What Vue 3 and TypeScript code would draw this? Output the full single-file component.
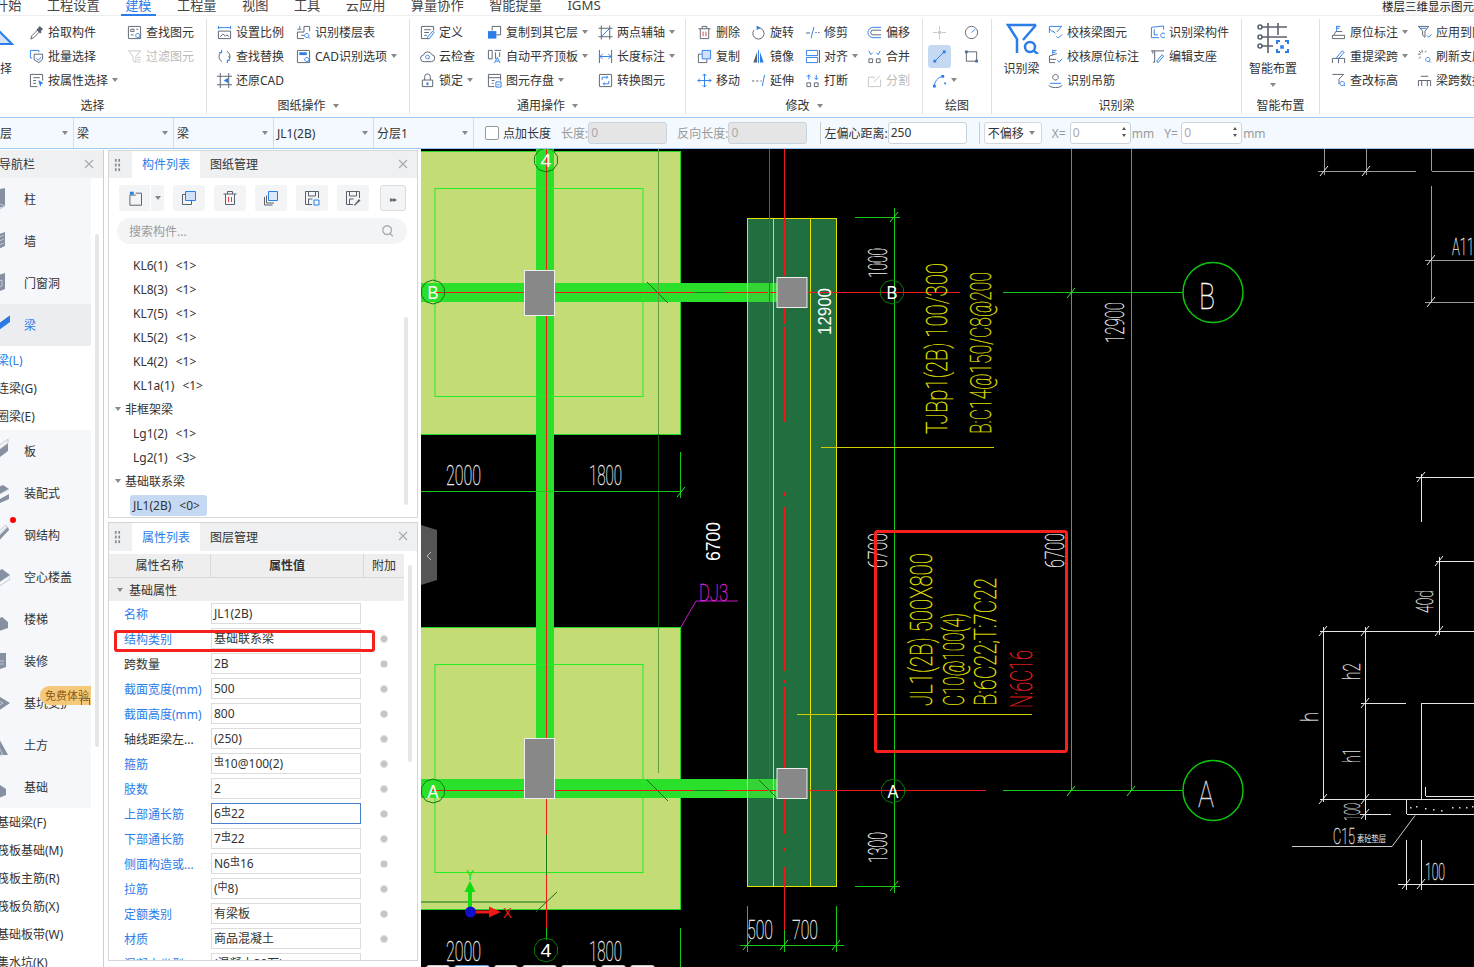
<script setup lang="ts">
const GRAY = '#59616d'
const BLUE = '#2b7de9'

// 图标都由几段 path 拼成：灰线、蓝线、蓝填充、灰填充
function ic(g = '', b = '', bf = '', gf = '', red = '') {
  let s = ''
  if (gf) s += `<path d="${gf}" fill="${GRAY}"/>`
  if (bf) s += `<path d="${bf}" fill="${BLUE}"/>`
  if (g) s += `<path d="${g}" fill="none" stroke="${GRAY}"/>`
  if (b) s += `<path d="${b}" fill="none" stroke="${BLUE}"/>`
  if (red) s += `<path d="${red}" fill="none" stroke="#e53935"/>`
  return s
}
const box = 'M2 1.5h12a.5.5 0 0 1 .5.5v12a.5.5 0 0 1-.5.5H2a.5.5 0 0 1-.5-.5V2a.5.5 0 0 1 .5-.5z'
const mag = 'M11.5 9a2.2 2.2 0 1 0 .01 0M13 12.6l1.8 1.8'
const feet = 'M2 10.5h4v4H2zM10 10.5h4v4h-4z'

const icons: Record<string, string> = {
  pick: ic('M3 11.5l6-6 2 2-6 6-3 1.5z', '', '', 'M9.5 3.5l2-2.5 3.5 3.5-2.5 2 1 1-1.5 1.5-4-4 1.5-1.5z'),
  batch: ic('M5.5 5.5h9v5.5l-4 3.5-5-3z', 'M10.5 3.5V1.5h-9v8h2M8 10l2 2 3-3.5'),
  attrsel: ic('M14.5 8V1.5h-13v13H9M4.5 5h7M4.5 8h3M4.5 11h3', '', 'M10 7.5l5.5 3.5-2.5.8-1 3z'),
  find: ic(box + 'M4 4.5h3.5v2.5H4zM4 10.5h3M10 4.5h2', mag),
  filter: ic('M1.5 2h13l-5 6v6l-3-1.5V8zM11 9h3.5M11 11.5h3.5M11 14h3.5'),
  scale: ic('M1.5 6.5h13v8h-13zM3.5 12.5l3-3 2.5 2.5 1.5-1.5 2.5 2', 'M1.5 1v3.5M14.5 1v3.5M2 2.8h12'),
  replace: ic('M10.5 2.5a6 6 0 0 1 3 7.5l-1-2.5M5.5 13.5a6 6 0 0 1-3-7.5', 'M5.5 2.5A6 6 0 0 0 2.5 6M10.5 13.5a6 6 0 0 0 3-3.5M5 1v3H2M11 15v-3h3'),
  restore: ic('M3.5 0v16M12.5 0v16M0 3.5h16M0 12.5h16', '', 'M12 5L7 8l5 3z'),
  floor: ic('M8.5 1.5v6h-7v7h7M8.5 1.5h6v5M1.5 4.5h4M5.5 11h3', 'M4 1v3' + mag),
  cadopt: ic(box, mag, 'M3.5 3.5h8v3h-8z'),
  define: ic('M14.5 6V1.5h-13v13h8M4.5 5h7M4.5 8h5M4.5 11h3', 'M10 14.5l5-6.5-1.5-1.5-5.5 6.5v1.5z'),
  cloud: ic('M4.5 13.5a3.5 3.5 0 0 1-.8-7A4.7 4.7 0 0 1 12.6 6a3.8 3.8 0 0 1-.2 7.5z', 'M8 6.5a2 2 0 1 0 .01 0M9.5 10l1 1'),
  lock: ic('M2.5 7.5h11v7h-11zM5 7.5V4a3 3 0 0 1 6 0v3.5', '', 'M7 10h2v3H7z'),
  copyfloor: ic('M5.5 6V1.5h9v9H10', '', 'M1 6.5h9v8H1z'),
  autoalign: ic('M1.5 1.5h4v9h-4zM8 1.5h7M9 3.5v7M13.5 3.5v5', 'M8 15l3-6 3 6M9.5 13h3'),
  save: ic('M14.5 8V1.5h-13v13H8M1.5 5h13M5 8h3M5 11h2', 'M9.5 9.5H15V15H9.5zM11 12.5h2.5'),
  twoaxis: ic('M3.5 .5v15M12.5 .5v15M.5 3.5h15M.5 12.5h15', 'M3.5 12.5l9-9'),
  dimlen: ic('M1.5 1v14M14.5 1v14', 'M2 8h12M2 8l3-2.5M2 8l3 2.5M14 8l-3-2.5M14 8l-3 2.5'),
  convert: ic(box, 'M4.5 7.5v-3h6M9 3l1.5 1.5L9 6M11.5 8.5v3h-6M7 13l-1.5-1.5L7 10'),
  del: ic('M1.5 4h13M3.5 4v10.5h9V4M5.5 4V1.5h5V4', '', '', '', 'M6.5 7v5M9.5 7v5'),
  copy: ic('M5 5.5H1.5v9h9V11') + `<path d="M5.5 1.5h9v9h-9z" fill="#cfe2fa" stroke="${BLUE}"/>`,
  move: ic('', 'M8 1v14M1 8h14M6 3l2-2 2 2M6 13l2 2 2-2M3 6L1 8l2 2M13 6l2 2-2 2'),
  rotate: ic('M8 3a6 6 0 1 1-5 2.6', '', 'M6 .5v5l4-2.5z'),
  mirror: ic('', 'M8 1v14', 'M9.5 3l4 11.5h-4z', 'M6.5 3l-4 11.5h4z'),
  extend: ic('M1 8.5h2.5M5.5 8.5H8M10 8.5h1.5', 'M14.5 2L12 14'),
  trim: ic('M1 8.5h4.5M11 8h1.5M14 8h1.5', 'M9.5 2L6.5 14'),
  align: ic('', 'M1.5 1.5h12V7h-12zM1.5 9h12v5.5h-12z', '', 'M15 1h1v14h-1z'),
  break: ic(feet, 'M4 2v5M2 4l2-2 2 2M12 7V2M10 5l2 2 2-2'),
  offset: ic('M15 5.5H6.5a2.5 2.5 0 0 0 0 5H15', 'M15 2.5H6.5a5.5 5.5 0 0 0 0 11H15'),
  merge: ic(feet, 'M2 2l2 4 2-2M14 2l-2 4-2-2'),
  split: ic('M14.5 7v7.5h-13v-10h7M7 10l7-7'),
  point: ic('M8 1v5M8 10v5M1 8h5M10 8h5', '', '', 'M6.5 6.5h3v3h-3z'),
  circle: ic('M8 1.5a6.5 6.5 0 1 0 .01 0', 'M8 8l4-3.5'),
  line: ic('', 'M3 13L13 3', 'M1.5 11.5h3v3h-3zM11.5 1.5h3v3h-3z'),
  rect: ic('M2.5 3h11v10h-11z', '', 'M1 1.5h3v3H1zM12 11.5h3v3h-3z'),
  arc: ic('', 'M2.5 14A11 11 0 0 1 11 3.5', 'M1 12.5h3v3H1zM10 2h3v3h-3zM13 10h2v2h-2z'),
  checkbeam: ic('', 'M1.5 1.5h13M1.5 1.5v7M14.5 1.5l-5 6M5 6l3 3M1.5 4l4 4M9 12l2 2 4-4'),
  checkspan: ic('M1.5 14.5v-7M1.5 7.5l8-2.5M1.5 11h7M1.5 14.5h6', 'M5 1v5M5 1.5h4M5 3.5h3M10 12l2 2 3-3.5'),
  hanger: ic('M1 13a7 2.5 0 0 0 14 0M8 1.5a3 3 0 1 0 .01 0', 'M2 11h12'),
  beamcomp: ic('', 'M1.5 2.5v11h8M1.5 2.5l13-1.5v4M4.5 4.5v6h4M14 8.5a2.5 2.5 0 1 0 .01 0'),
  support: ic('M1 2h14M5 2v12M3 2v3M5 14H3', 'M9 14l5.5-6.5L13 6l-5.5 6.5V14z'),
  orig: ic('M1.5 14.5V11h13v3.5M1.5 14.5h13M3 11l2-4h7', 'M6 1v6M6 1.5h4M6 3.5h3'),
  reextract: ic('M1.5 15v-5h13v5M8 10v5', 'M6 9l6-7 2 1.5L8 10.5z'),
  height: ic('M1.5 1.5h12l-5 5V12', 'M12 9a2.3 2.3 0 1 0 .01 0M13.5 12.5L15 14'),
  apply: ic('M1.5 1.5h11l-4 5V13L6 11V6.5z', 'M3 3.5h7M10.5 11l2 2 3-3'),
  refresh: ic('M5.5 1v3M1 5.5h3M2 2l2 2M10 2L8.5 3.5M2 10l2-1.5', mag),
  spancopy: ic('M1.5 14V8M14.5 14V8M1.5 8h13M4 3.5h8M5 8v6M11 8v6'),
  newdoc: ic('M3 5v10.5h12V3H9M3 5h6', '', 'M3 1.5h4v3H3z'),
  delbig: ic('M1.5 4h13M3.5 4v10.5h9V4M5.5 4V1.5h5V4', '', '', '', 'M6.5 7v5M9.5 7v5'),
  copyup: ic('M5 4.5H1.5v10h9V11') + `<path d="M4.5 1.5h10v9h-10z" fill="#cfe2fa" stroke="${BLUE}"/>`,
  layers: ic('M1.5 7v8h8M3.5 5.5V13H11') + `<path d="M5.5 1.5h9v9h-9z" fill="#dbe9fb" stroke="${BLUE}"/>`,
  savebox: ic('M14.5 8V1.5h-13v13H8M4.5 1.5V6h7V1.5M4.5 14.5V9h4', 'M10 10h5v5h-5z'),
  saveedit: ic('M14.5 8V1.5h-13v13H8M4.5 1.5V6h7V1.5M4.5 14.5V9h4', '', '', 'M9 15l5-6 1.5 1.5-5.5 5H9z'),
  search: `<path d="M7 2a5 5 0 1 0 .01 0M10.5 11l3 3" fill="none" stroke="#aaa" stroke-width="1.5"/>`,
}

type Item = { t: string; i: string; drop?: boolean; dis?: boolean; on?: boolean }
type Col = { w: number; items?: Item[]; big?: { t: string; k: string; drop?: boolean } }
type Group = { w: number; pad: number; label: string; drop?: boolean; cols: Col[] }

const groups: Group[] = [
  {
    w: 221, pad: 0, label: '选择',
    cols: [
      { w: 43, big: { t: '选择', k: 'select' } },
      { w: 98, items: [{ t: '拾取构件', i: 'pick' }, { t: '批量选择', i: 'batch' }, { t: '按属性选择', i: 'attrsel', drop: true }] },
      { w: 78, items: [{ t: '查找图元', i: 'find' }, { t: '过滤图元', i: 'filter', dis: true }] },
    ],
  },
  {
    w: 203, pad: 10, label: '图纸操作', drop: true,
    cols: [
      { w: 79, items: [{ t: '设置比例', i: 'scale' }, { t: '查找替换', i: 'replace' }, { t: '还原CAD', i: 'restore' }] },
      { w: 110, items: [{ t: '识别楼层表', i: 'floor' }, { t: 'CAD识别选项', i: 'cadopt', drop: true }] },
    ],
  },
  {
    w: 276, pad: 10, label: '通用操作', drop: true,
    cols: [
      { w: 67, items: [{ t: '定义', i: 'define' }, { t: '云检查', i: 'cloud' }, { t: '锁定', i: 'lock', drop: true }] },
      { w: 111, items: [{ t: '复制到其它层', i: 'copyfloor', drop: true }, { t: '自动平齐顶板', i: 'autoalign', drop: true }, { t: '图元存盘', i: 'save', drop: true }] },
      { w: 86, items: [{ t: '两点辅轴', i: 'twoaxis', drop: true }, { t: '长度标注', i: 'dimlen', drop: true }, { t: '转换图元', i: 'convert' }] },
    ],
  },
  {
    w: 237, pad: 11, label: '修改', drop: true,
    cols: [
      { w: 54, items: [{ t: '删除', i: 'del' }, { t: '复制', i: 'copy' }, { t: '移动', i: 'move' }] },
      { w: 54, items: [{ t: '旋转', i: 'rotate' }, { t: '镜像', i: 'mirror' }, { t: '延伸', i: 'extend' }] },
      { w: 62, items: [{ t: '修剪', i: 'trim' }, { t: '对齐', i: 'align', drop: true }, { t: '打断', i: 'break' }] },
      { w: 54, items: [{ t: '偏移', i: 'offset' }, { t: '合并', i: 'merge' }, { t: '分割', i: 'split', dis: true }] },
    ],
  },
  {
    w: 69, pad: 9, label: '绘图',
    cols: [
      { w: 32, items: [{ t: '', i: 'point', dis: true }, { t: '', i: 'line', on: true }, { t: '', i: 'arc', drop: true }] },
      { w: 20, items: [{ t: '', i: 'circle' }, { t: '', i: 'rect' }] },
    ],
  },
  {
    w: 250, pad: 3, label: '识别梁',
    cols: [
      { w: 53, big: { t: '识别梁', k: 'beam' } },
      { w: 102, items: [{ t: '校核梁图元', i: 'checkbeam' }, { t: '校核原位标注', i: 'checkspan' }, { t: '识别吊筋', i: 'hanger' }] },
      { w: 88, items: [{ t: '识别梁构件', i: 'beamcomp' }, { t: '编辑支座', i: 'support' }] },
    ],
  },
  {
    w: 78, pad: 1, label: '智能布置',
    cols: [{ w: 60, big: { t: '智能布置', k: 'smart', drop: true } }],
  },
  {
    w: 170, pad: 11, label: '',
    cols: [
      { w: 86, items: [{ t: '原位标注', i: 'orig', drop: true }, { t: '重提梁跨', i: 'reextract', drop: true }, { t: '查改标高', i: 'height' }] },
      { w: 90, items: [{ t: '应用到同名梁', i: 'apply' }, { t: '刷新支座尺寸', i: 'refresh' }, { t: '梁跨数据复制', i: 'spancopy' }] },
    ],
  },
]

const menus = ['开始', '工程设置', '建模', '工程量', '视图', '工具', '云应用', '算量协作', '智能提量', 'IGMS']
const selects = ['首层', '梁', '梁', 'JL1(2B)', '分层1']

type Nav = { t: string; k?: string; sub?: boolean; on?: boolean; dot?: boolean; tag?: boolean }
const nav: Nav[] = [
  { t: '柱', k: 'column' }, { t: '墙', k: 'wall' }, { t: '门窗洞', k: 'door' }, { t: '梁', k: 'beam', on: true },
  { t: '梁(L)', sub: true, on: true }, { t: '连梁(G)', sub: true }, { t: '圈梁(E)', sub: true },
  { t: '板', k: 'slab' }, { t: '装配式', k: 'pre' }, { t: '钢结构', k: 'steel', dot: true }, { t: '空心楼盖', k: 'hollow' },
  { t: '楼梯', k: 'stair' }, { t: '装修', k: 'deco' }, { t: '基坑支护', k: 'pit', tag: true }, { t: '土方', k: 'earth' }, { t: '基础', k: 'found' },
  { t: '基础梁(F)', sub: true }, { t: '筏板基础(M)', sub: true }, { t: '筏板主筋(R)', sub: true },
  { t: '筏板负筋(X)', sub: true }, { t: '基础板带(W)', sub: true }, { t: '集水坑(K)', sub: true },
]
const navShapes: Record<string, [string, string]> = {
  column: ['M14 2l5-1v18l-10 3v-3l5-2z', 'M9 19l5-2 5 2-5 3z'],
  wall: ['M10 6l9-3v14l-9 4z', 'M11 9l7-3M11 13l7-3M11 17l7-3'],
  door: ['M9 5l10-3v16L9 22z', 'M13 10l3-1v6l-3 1z'],
  beam: ['M6 22L24 9V3L6 16z', 'M6 22v-6l18-13'],
  slab: ['M6 16L22 4v4L6 20zM6 20L22 8v4L6 24z', 'M6 12L22 0v4L6 16z'],
  pre: ['M8 8l9-4 6 4-9 5zM8 14l6 4 9-5v5l-9 4-6-4z', 'M8 8l6 5 9-5'],
  steel: ['M6 20L22 4l1 3L8 23z', 'M6 14L20 2l1 2L7 17z'],
  hollow: ['M4 12L16 4l8 6-12 8z', 'M4 12v4l8 6 12-8v-4'],
  stair: ['M6 6l6 6 4-2 6 5v6l-9 3-7-6z', 'M6 6v11'],
  deco: ['M8 4h12v14L8 22z', 'M10 12h8M10 15h8'],
  pit: ['M2 14L14 6l10 6-12 8z', 'M8 13l5-3 4 2-5 3z'],
  earth: ['M2 22L12 4l10 18z', 'M8 22l4-10 5 10z'],
  found: ['M8 2h6v8l6 4v6l-7 3-7-3v-6l2-1z', 'M13 10v13'],
}

type Row = { n: string; pre?: string; sym?: string; post?: string; blue?: boolean; dot?: boolean; focus?: boolean }
const rows: Row[] = [
  { n: '名称', pre: 'JL1(2B)', blue: true },
  { n: '结构类别', pre: '基础联系梁', blue: true, dot: true },
  { n: '跨数量', pre: '2B', dot: true },
  { n: '截面宽度(mm)', pre: '500', blue: true, dot: true },
  { n: '截面高度(mm)', pre: '800', blue: true, dot: true },
  { n: '轴线距梁左...', pre: '(250)', dot: true },
  { n: '箍筋', sym: '虫', post: '10@100(2)', blue: true, dot: true },
  { n: '肢数', pre: '2', blue: true, dot: true },
  { n: '上部通长筋', pre: '6', sym: '虫', post: '22', blue: true, dot: true, focus: true },
  { n: '下部通长筋', pre: '7', sym: '虫', post: '22', blue: true, dot: true },
  { n: '侧面构造或...', pre: 'N6', sym: '虫', post: '16', blue: true, dot: true },
  { n: '拉筋', pre: '(', sym: '中', post: '8)', blue: true, dot: true },
  { n: '定额类别', pre: '有梁板', blue: true, dot: true },
  { n: '材质', pre: '商品混凝土', blue: true, dot: true },
  { n: '混凝土类型', pre: '(混凝土20石)', blue: true, dot: true },
]

type Node = { t: string; c?: string; head?: boolean; on?: boolean }
const list: Node[] = [
  { t: 'KL6(1)', c: '<1>' }, { t: 'KL8(3)', c: '<1>' }, { t: 'KL7(5)', c: '<1>' },
  { t: 'KL5(2)', c: '<1>' }, { t: 'KL4(2)', c: '<1>' }, { t: 'KL1a(1)', c: '<1>' },
  { t: '非框架梁', head: true }, { t: 'Lg1(2)', c: '<1>' }, { t: 'Lg2(1)', c: '<3>' },
  { t: '基础联系梁', head: true }, { t: 'JL1(2B)', c: '<0>', on: true },
]
const tools = [{ i: 'copyup' }, { i: 'delbig' }, { i: 'layers' }, { i: 'savebox' }, { i: 'saveedit' }]

// 画布：坐标直接用截图里的像素坐标
function hex(cx: number, cy: number, r = 12) {
  const pts: string[] = []
  for (let k = 0; k < 10; k++) {
    const a = (Math.PI * 2 * k) / 10 + Math.PI / 10
    pts.push(`${(cx + r * Math.cos(a)).toFixed(1)},${(cy + r * Math.sin(a)).toFixed(1)}`)
  }
  return pts.join(' ')
}
const axisMarks = [
  { t: '4', x: 546, y: 160 }, { t: '4', x: 546, y: 950 }, { t: 'B', x: 433, y: 292 },
  { t: 'A', x: 433, y: 791 }, { t: 'B', x: 892, y: 292 }, { t: 'A', x: 893, y: 791 },
]
function ticks(points: number[][]) {
  return points.map(([x, y]) => `M${x - 4} ${y + 5}L${x + 4} ${y - 5}`).join('')
}
const greenTicks = ticks([[681, 492], [894, 217], [894, 886], [1071, 293], [1071, 791], [1131, 791], [747, 945], [784, 945], [836, 945]])
const whiteTicks = ticks([[1324, 171], [1366, 171], [1431, 260], [1431, 302], [1421, 477], [1323, 631], [1365, 631], [1439, 561], [1439, 631], [1365, 703], [1323, 799], [1365, 799], [1365, 814], [1406, 884], [1421, 884]])

// 横排 CAD 文字
const flat = [
  { t: '2000', x: 446, y: 485, l: 35, s: 28, c: '#f4f4f4' },
  { t: '1800', x: 589, y: 485, l: 33, s: 28, c: '#f4f4f4' },
  { t: '2000', x: 446, y: 961, l: 35, s: 28, c: '#f4f4f4' },
  { t: '1800', x: 589, y: 961, l: 33, s: 28, c: '#f4f4f4' },
  { t: '500', x: 747, y: 939, l: 26, s: 26, c: '#f4f4f4' },
  { t: '700', x: 792, y: 939, l: 26, s: 26, c: '#f4f4f4' },
  { t: 'DJ3', x: 699, y: 601, l: 29, s: 24, c: '#e020e0' },
  { t: 'B', x: 1199, y: 309, l: 16, s: 36, c: '#fff' },
  { t: 'A', x: 1198, y: 807, l: 16, s: 36, c: '#ddd' },
  { t: 'A11', x: 1452, y: 255, l: 22, s: 23, c: '#f0f0f0' },
  { t: 'C15', x: 1333, y: 844, l: 22, s: 22, c: '#eee' },
  { t: '100', x: 1425, y: 880, l: 20, s: 24, c: '#f4f4f4' },
]
// 竖排（逆时针 90°）：x 为基线，y 为起点
const upright = [
  { t: 'TJBp1(2B) 100/300', x: 947, y: 434, l: 171, s: 30, c: '#f0f000' },
  { t: 'B:C14@150/C8@200', x: 991, y: 434, l: 162, s: 30, c: '#e6e600' },
  { t: 'JL1(2B) 500X800', x: 932, y: 706, l: 153, s: 31, c: '#f0f000' },
  { t: 'C10@100(4)', x: 964, y: 706, l: 93, s: 30, c: '#f0f000' },
  { t: 'B:6C22;T:7C22', x: 996, y: 706, l: 128, s: 31, c: '#f0f000' },
  { t: 'N:6C16', x: 1032, y: 708, l: 58, s: 31, c: '#ff2020' },
  { t: '6700', x: 887, y: 568, l: 35, s: 26, c: '#f4f4f4' },
  { t: '6700', x: 1064, y: 568, l: 35, s: 26, c: '#f4f4f4' },
  { t: '1000', x: 887, y: 278, l: 30, s: 26, c: '#f4f4f4' },
  { t: '12900', x: 1124, y: 343, l: 41, s: 26, c: '#f4f4f4' },
  { t: '1300', x: 887, y: 863, l: 31, s: 26, c: '#f4f4f4' },
  { t: '40d', x: 1433, y: 613, l: 23, s: 24, c: '#e6e6e6' },
  { t: 'h2', x: 1360, y: 680, l: 17, s: 24, c: '#e6e6e6' },
  { t: 'h', x: 1318, y: 722, l: 10, s: 24, c: '#e6e6e6' },
  { t: 'h1', x: 1360, y: 763, l: 15, s: 24, c: '#e6e6e6' },
  { t: '100', x: 1360, y: 821, l: 18, s: 22, c: '#e6e6e6' },
]
const solidUp = [
  { t: '12900', x: 831, y: 335, l: 47, s: 19, c: '#fff' },
  { t: '6700', x: 720, y: 561, l: 39, s: 20, c: '#fff' },
]
const dots = [1410, 1416, 1425, 1433, 1441, 1452, 1459, 1466, 1472]
const sheetTabs = [24, 36, 24, 35, 36, 25, 25]
</script>

<template>
  <div class="app">
    <header class="menu">
      <span v-for="m in menus" :key="m" class="menu-item" :class="{ active: m === '建模' }">{{ m }}</span>
      <span class="menu-right">楼层三维显示图元</span>
    </header>

    <section class="ribbon">
      <div v-for="g in groups" :key="g.w + g.label" class="group" :style="{ width: g.w + 'px' }">
        <div class="group-body" :style="{ paddingLeft: g.pad + 'px' }">
          <div v-for="(c, ci) in g.cols" :key="ci" class="col" :style="{ width: c.w + 'px' }">
            <div v-if="c.big" class="big" :class="'big-' + c.big.k">
              <svg v-if="c.big.k === 'select'" class="big-ic" width="28" height="32" viewBox="0 0 28 32">
                <path d="M13 9L26 22H6z" fill="#d5e4f8" stroke="#2b7de9" stroke-width="2" />
              </svg>
              <svg v-else-if="c.big.k === 'beam'" class="big-ic" width="34" height="32" viewBox="0 0 34 32" fill="none" stroke="#2b7de9" stroke-width="2.5">
                <path d="M31 3H3l9 14v14M31 3L18 18" />
                <circle cx="25" cy="25" r="5" />
                <path d="M29 29l4 3" />
              </svg>
              <svg v-else class="big-ic" width="34" height="32" viewBox="0 0 34 32" fill="none" stroke="#59616d" stroke-width="1.6">
                <path d="M5 5h26M5 15h26M5 24h12M12 1v30M22 1v12" />
                <circle cx="4" cy="5" r="2" />
                <circle cx="4" cy="15" r="2" />
                <circle cx="4" cy="24" r="2" />
                <path d="M21 22v-3h3M29 19h3v3M32 27v3h-3M24 30h-3v-3" stroke="#2b7de9" stroke-width="2" />
                <path d="M25 24h2v2h-2z" stroke="#2b7de9" />
              </svg>
              <span class="big-text">{{ c.big.t }}</span>
              <i v-if="c.big.drop" class="caret big-caret" />
            </div>
            <template v-else>
              <div v-for="it in c.items" :key="it.i" class="item" :class="{ dis: it.dis, on: it.on }">
                <svg class="ic" viewBox="0 0 16 16" v-html="icons[it.i]" />
                <span v-if="it.t">{{ it.t }}</span>
                <i v-if="it.drop" class="caret" />
              </div>
            </template>
          </div>
        </div>
        <div class="group-label">{{ g.label }}<i v-if="g.drop" class="caret label-caret" /></div>
      </div>
    </section>

    <section class="optbar">
      <div v-for="(s, i) in selects" :key="i" class="opt-select" :class="{ first: i === 0 }">
        <span>{{ s }}</span><i class="caret" />
      </div>
      <label class="opt-check"><i class="check" />点加长度</label>
      <span class="opt-label dim len">长度:</span>
      <span class="opt-input off">0</span>
      <span class="opt-label dim rev">反向长度:</span>
      <span class="opt-input off">0</span>
      <i class="opt-div" />
      <span class="opt-label">左偏心距离:</span>
      <span class="opt-input val">250</span>
      <i class="opt-div second" />
      <div class="offset-select">不偏移<i class="caret" /></div>
      <span class="opt-label dim xlab">X=</span>
      <span class="opt-input spin"><em>0</em><b class="arrows"><i class="up" /><i class="down" /></b></span>
      <span class="opt-label dim unit">mm</span>
      <span class="opt-label dim ylab">Y=</span>
      <span class="opt-input spin"><em>0</em><b class="arrows"><i class="up" /><i class="down" /></b></span>
      <span class="opt-label dim unit">mm</span>
    </section>

    <main class="work">
      <aside class="nav">
        <div class="nav-head">
          <span>导航栏</span>
          <svg class="close" viewBox="0 0 10 10"><path d="M1 1l8 8M9 1l-8 8" /></svg>
        </div>
        <div class="nav-list">
          <div
            v-for="n in nav"
            :key="n.t + (n.sub ? 's' : '')"
            class="nav-row"
            :class="{ sub: n.sub, on: n.on }"
          >
            <svg v-if="n.k" class="nav-ic" viewBox="0 0 24 24">
              <path :d="navShapes[n.k][0]" :fill="n.on ? '#2b7de9' : '#8790a0'" />
              <path :d="navShapes[n.k][1]" fill="none" :stroke="n.on ? '#1c5fc0' : '#c3c8d2'" />
            </svg>
            <span>{{ n.t }}</span>
            <i v-if="n.dot" class="red-dot" />
            <span v-if="n.tag" class="free-tag">免费体验<i class="tag-lock" /></span>
          </div>
        </div>
        <i class="nav-scroll" />
      </aside>

      <div class="panels">
        <section class="panel list-panel">
          <div class="panel-head">
            <i class="grip" />
            <span class="tab active">构件列表</span>
            <span class="tab">图纸管理</span>
            <svg class="close" viewBox="0 0 10 10"><path d="M1 1l8 8M9 1l-8 8" /></svg>
          </div>
          <div class="toolbar">
            <div class="tool split">
              <svg class="tool-ic" viewBox="0 0 16 16" v-html="icons.newdoc" />
              <span class="tool-drop"><i class="caret" /></span>
            </div>
            <div v-for="t in tools" :key="t.i" class="tool">
              <svg class="tool-ic" viewBox="0 0 16 16" v-html="icons[t.i]" />
            </div>
            <div class="tool more">▸▸</div>
          </div>
          <div class="search">
            <span>搜索构件...</span>
            <svg class="search-ic" viewBox="0 0 16 16" v-html="icons.search" />
          </div>
          <ul class="tree">
            <li v-for="r in list" :key="r.t" class="tree-row" :class="{ head: r.head }">
              <i v-if="r.head" class="caret tree-caret" />
              <span class="tree-text" :class="{ on: r.on }">{{ r.t }}<em v-if="r.c">{{ r.c }}</em></span>
            </li>
          </ul>
          <i class="panel-scroll" />
        </section>

        <section class="panel attr-panel">
          <div class="panel-head">
            <i class="grip" />
            <span class="tab active">属性列表</span>
            <span class="tab">图层管理</span>
            <svg class="close" viewBox="0 0 10 10"><path d="M1 1l8 8M9 1l-8 8" /></svg>
          </div>
          <div class="attr-head">
            <span>属性名称</span>
            <span class="strong">属性值</span>
            <span>附加</span>
          </div>
          <div class="attr-group"><i class="caret" />基础属性</div>
          <div v-for="r in rows" :key="r.n" class="attr-row">
            <span class="attr-name" :class="{ blue: r.blue }">{{ r.n }}</span>
            <span class="attr-val" :class="{ focus: r.focus }">{{ r.pre }}<sup v-if="r.sym">{{ r.sym }}</sup>{{ r.post }}</span>
            <i v-if="r.dot" class="attr-dot" />
          </div>
          <i class="attr-highlight" />
          <i class="attr-scroll" />
        </section>
      </div>

      <div class="canvas">
        <svg class="cad" viewBox="421 149 1053 818" width="1053" height="818">
          <rect x="421" y="149" width="1053" height="818" fill="#000" />

          <!-- 独立基础 -->
          <g fill="#c3dc76" stroke="#22d822">
            <rect x="420.5" y="151.5" width="260" height="283" />
            <rect x="420.5" y="627.5" width="260" height="282" />
          </g>
          <!-- 联系梁 -->
          <g fill="#2be02b">
            <rect x="536" y="149" width="18" height="590" />
            <rect x="421" y="283" width="356" height="19" />
            <rect x="421" y="779" width="356" height="19" />
          </g>
          <g fill="none" stroke="#22ee22">
            <rect x="435" y="188.5" width="208" height="208" />
            <rect x="435" y="664.5" width="208" height="208" />
          </g>

          <!-- 基础梁条带 -->
          <rect x="747.5" y="218.5" width="89" height="668" fill="#216f3f" />
          <path d="M747 283h30v19h-30zM747 779h30v19h-30z" fill="#33d433" />
          <g fill="none" stroke="#e4e400" shape-rendering="crispEdges">
            <rect x="747.5" y="218.5" width="89" height="668" />
            <path d="M773.5 218v668M810.5 218v668" />
          </g>

          <!-- 暗色轴线 -->
          <g fill="none" shape-rendering="crispEdges">
            <path d="M658.5 149v285M658.5 627v146" stroke="#5fa040" stroke-width="1.5" />
            <path d="M658.5 434v193" stroke="#0d5a0d" stroke-width="1.5" />
            <path d="M769.5 149v629" stroke="#0f8a2a" />
            <path d="M421 901.5h125" stroke="#6aa645" stroke-width="2" />
          </g>
          <path d="M647 282l21 21M647 780l21 21M759 780l18 18M536 912l21-20" stroke="#1a6a1a" fill="none" />

          <!-- 红色轴线 -->
          <g fill="none" stroke="#f01818" shape-rendering="crispEdges">
            <path d="M546.5 149v686M546.5 875v53" />
            <path d="M432 292.5h262M726 292.5h42M770 292.5h190" />
            <path d="M432 790.5h262M726 790.5h42M770 790.5h216" />
            <path d="M784.5 149v127M784.5 308v16M784.5 327v95M784.5 492v4M784.5 507v164M784.5 680v3M784.5 687v147M784.5 848v3M784.5 867v63" />
          </g>
          <path d="M694 292.5h32M694 790.5h32M546.5 835v40" stroke="#1a7a1a" fill="none" shape-rendering="crispEdges" />

          <!-- 柱 -->
          <g fill="#888" stroke="#eee">
            <rect x="524.5" y="270.5" width="30" height="45" />
            <rect x="777" y="277.5" width="30" height="30" />
            <rect x="524.5" y="738.5" width="30" height="60" />
            <rect x="777" y="768.5" width="30" height="30" />
          </g>

          <!-- 绿色尺寸线 -->
          <g fill="none" stroke="#16c916" shape-rendering="crispEdges">
            <path d="M421 491.5h261M680.5 452v46M680.5 928v39" />
            <path d="M894.5 208v685M855 217.5h45M855 886.5h45" />
            <path d="M1003 292.5h180M1003 790.5h180" />
            <path d="M1071.5 149v642M1131.5 149v642" />
            <path d="M747.5 906v46M784.5 930v22M836.5 906v46M740 945.5h104" />
            <path d="M546.5 928v12" />
          </g>
          <path :d="greenTicks" stroke="#2fe82f" fill="none" />
          <ellipse cx="1213" cy="292.5" rx="30" ry="30" fill="none" stroke="#0cc40c" stroke-width="1.5" />
          <ellipse cx="1213" cy="790.5" rx="30" ry="30" fill="none" stroke="#0cc40c" stroke-width="1.5" />

          <!-- 轴号 -->
          <g v-for="m in axisMarks" :key="m.t + m.x + m.y">
            <polygon :points="hex(m.x, m.y)" fill="none" stroke="#0b7a0b" />
            <text class="axis-no" :x="m.x" :y="m.y + 7" text-anchor="middle" textLength="11" lengthAdjust="spacingAndGlyphs">{{ m.t }}</text>
          </g>

          <!-- 标注引线 -->
          <path d="M681 627l15-26h42" stroke="#c818c8" fill="none" />
          <path d="M821 447.5h173M797 714.5h235" stroke="#cfcf00" fill="none" shape-rendering="crispEdges" />

          <!-- 右侧大样 -->
          <g fill="none" stroke="#9a9a9a" shape-rendering="crispEdges">
            <path d="M1318 171.5h98M1324.5 149v26M1366.5 149v26M1431.5 149v22M1431.5 171.5h43M1431.5 186v116M1425 260.5h49M1425 302.5h49" />
          </g>
          <g fill="none" stroke="#e6e6e6" shape-rendering="crispEdges">
            <path d="M1416 477.5h58M1421.5 474v48" />
            <path d="M1320 631.5h154M1323.5 627v175M1365.5 627v193M1439.5 557v78M1436 561.5h38" />
            <path d="M1361 703.5h45M1421.5 703v96M1421.5 703.5h53M1320 799.5h154" />
            <path d="M1425.5 787v9M1425.5 796.5h49" />
            <path d="M1406.5 799v15M1406.5 814.5h68M1360 814.5h31" />
            <path d="M1406.5 840v50M1421.5 840v50M1398 884.5h76" />
          </g>
          <path :d="whiteTicks" stroke="#f0f0f0" fill="none" />
          <path d="M1292 846.5h100l23-31" stroke="#ccc" fill="none" />
          <rect v-for="d in dots" :key="d" :x="d" :y="804 + (d % 7)" width="1.5" height="1.5" fill="#ddd" />
          <text class="tiny" x="1357" y="842" textLength="29" lengthAdjust="spacingAndGlyphs">素砼垫层</text>

          <!-- 坐标系 -->
          <path d="M470 912v-22" stroke="#10dc10" stroke-width="4" />
          <path d="M470 881l-5.5 11h11z" fill="#10dc10" />
          <path d="M474 912h20" stroke="#f01818" stroke-width="3" />
          <path d="M501 912l-12-5.5v11z" fill="#f01818" />
          <circle cx="470.5" cy="912" r="5.5" fill="#1010c8" />
          <text class="coord" x="466" y="880" fill="#10dc10" textLength="8" lengthAdjust="spacingAndGlyphs">Y</text>
          <text class="coord" x="503" y="918" fill="#f01818" textLength="9" lengthAdjust="spacingAndGlyphs">X</text>

          <!-- CAD 文字 -->
          <text
            v-for="t in flat"
            :key="t.t + t.x + t.y"
            class="cad-text"
            :x="t.x"
            :y="t.y"
            :font-size="t.s"
            :fill="t.c"
            :stroke="t.c"
            :textLength="t.l"
            lengthAdjust="spacingAndGlyphs"
          >{{ t.t }}</text>
          <text
            v-for="t in upright"
            :key="t.t + t.x"
            class="cad-text"
            :transform="`rotate(-90 ${t.x} ${t.y})`"
            :x="t.x"
            :y="t.y"
            :font-size="t.s"
            :fill="t.c"
            :stroke="t.c"
            :textLength="t.l"
            lengthAdjust="spacingAndGlyphs"
          >{{ t.t }}</text>
          <text
            v-for="t in solidUp"
            :key="t.t + t.x"
            class="solid-text"
            :transform="`rotate(-90 ${t.x} ${t.y})`"
            :x="t.x"
            :y="t.y"
            :font-size="t.s"
            :textLength="t.l"
            lengthAdjust="spacingAndGlyphs"
          >{{ t.t }}</text>

          <!-- 标注框 -->
          <rect x="875.5" y="531.5" width="191" height="220" rx="2" fill="none" stroke="#f8201c" stroke-width="3" />

          <!-- 收起面板 -->
          <path d="M421 525l16 5v50l-16 5z" fill="#555" />
          <path d="M431 552l-4 4 4 4" stroke="#bbb" fill="none" />
        </svg>
        <div class="sheet-tabs">
          <i v-for="(w, i) in sheetTabs" :key="i" :class="{ on: i === 1 }" :style="{ width: w + 'px' }" />
        </div>
      </div>
    </main>
  </div>
</template>

<style scoped>
.app {
  width: 1474px;
  height: 967px;
  overflow: hidden;
  display: flex;
  flex-direction: column;
  background: #fff;
  color: #333;
  font-family: 'Noto Sans', 'Noto Sans CJK SC', sans-serif;
  font-size: 12px;
}

.menu {
  height: 16px;
  flex: none;
  display: flex;
  gap: 25.5px;
  margin-left: -5px;
  font-size: 13.2px;
  line-height: 11px;
  white-space: nowrap;
  border-bottom: 1px solid #eee;
  box-sizing: border-box;
}
.menu-item {
  position: relative;
  color: #444;
}
.menu-item.active {
  color: #2b7de9;
}
.menu-item.active::after {
  content: '';
  position: absolute;
  left: -4px;
  right: -4px;
  top: 14px;
  height: 2px;
  background: #2b7de9;
}
.menu-right {
  width: 92px;
  overflow: hidden;
  margin-left: auto;
  font-size: 11.5px;
  line-height: 13px;
  background: #f8f8f8;
  color: #222;
}

.ribbon {
  height: 101px;
  flex: none;
  display: flex;
  margin-left: -14px;
  white-space: nowrap;
}
.group {
  flex: none;
  box-sizing: border-box;
  height: 95px;
  margin-top: 3px;
  padding-top: 1px;
  border-right: 1px solid #e0e0e0;
}
.group:first-child .group-label {
  padding-right: 7px;
}
.group:last-child {
  border-right: 0;
}
.group-body {
  display: flex;
  height: 72px;
}
.col {
  flex: none;
}
.item {
  height: 24px;
  display: flex;
  align-items: center;
  gap: 4px;
}
.item.on .ic {
  background: #c5daf2;
  box-shadow: 0 0 0 4px #c5daf2;
  border-radius: 1px;
}
.item.dis {
  color: #bbb;
}
.item.dis .ic {
  opacity: 0.35;
}
.ic {
  width: 15px;
  height: 15px;
  flex: none;
}
.caret {
  display: inline-block;
  width: 0;
  height: 0;
  border: 3px solid transparent;
  border-top: 4px solid #888;
  border-bottom: 0;
}
.big {
  display: flex;
  flex-direction: column;
  align-items: center;
  padding-top: 2px;
}
.big-select {
  width: 28px;
}
.big-text {
  margin-top: 6px;
  line-height: 18px;
}
.big-caret {
  margin-top: 5px;
}
.group-label {
  margin-top: 5px;
  line-height: 18px;
  text-align: center;
}
.label-caret {
  margin-left: 7px;
  vertical-align: 2px;
}

.optbar {
  height: 32px;
  flex: none;
  box-sizing: border-box;
  display: flex;
  align-items: center;
  background: #f3f9fe;
  border-top: 1px solid #9cc9f3;
  border-bottom: 1px solid #9cc9f3;
  white-space: nowrap;
}
.opt-select {
  width: 100px;
  height: 100%;
  flex: none;
  box-sizing: border-box;
  display: flex;
  align-items: center;
  justify-content: space-between;
  padding: 0 5px 0 3px;
  border-right: 1px solid #d8dde2;
}
.opt-select.first {
  width: 74px;
  padding-left: 0;
}
.opt-select.first span {
  margin-left: -12px;
}
.opt-check {
  display: flex;
  align-items: center;
  gap: 4px;
  margin-left: 11px;
}
.check {
  width: 12px;
  height: 12px;
  border: 1px solid #999;
  border-radius: 2px;
  background: #fff;
}
.opt-label.dim {
  color: #9a9a9a;
}
.opt-label.len {
  margin-left: 10px;
}
.opt-label.rev {
  margin-left: 10px;
}
.opt-input {
  box-sizing: border-box;
  width: 79px;
  height: 22px;
  flex: none;
  border: 1px solid #c9d3dc;
  border-radius: 3px;
  padding-left: 2px;
  line-height: 20px;
  background: #fff;
}
.opt-input.off {
  background: #e5e5e5;
  color: #aaa;
}
.opt-input.val {
  color: #333;
}
.opt-div {
  width: 1px;
  height: 22px;
  background: #ccc;
  margin: 0 3px 0 13px;
}
.opt-div.second {
  margin: 0 4px 0 12px;
}
.offset-select {
  width: 58px;
  height: 22px;
  box-sizing: border-box;
  display: flex;
  align-items: center;
  justify-content: space-between;
  padding: 0 6px 0 3px;
  background: #fff;
  border: 1px solid #d4d8dc;
  border-radius: 3px;
}
.opt-label.xlab {
  margin-left: 10px;
  width: 18px;
}
.opt-label.ylab {
  margin-left: 10px;
  width: 17px;
}
.opt-input.spin {
  position: relative;
  width: 61px;
  color: #aaa;
}
.opt-input.spin em {
  font-style: normal;
}
.arrows {
  position: absolute;
  right: 4px;
  top: 4px;
  display: flex;
  flex-direction: column;
  gap: 4px;
}
.arrows i {
  width: 0;
  height: 0;
  border: 2.5px solid transparent;
}
.arrows .up {
  border-bottom: 3px solid #555;
  border-top: 0;
}
.arrows .down {
  border-top: 3px solid #555;
  border-bottom: 0;
}
.opt-label.unit {
  margin-left: 1px;
}

.work {
  flex: 1;
  min-height: 0;
  display: flex;
}
.close {
  width: 10px;
  height: 10px;
  fill: none;
  stroke: #a8a8a8;
  stroke-width: 1.1;
}

.nav {
  position: relative;
  width: 104px;
  flex: none;
  box-sizing: border-box;
  margin-top: 1px;
  border-right: 1px solid #cfcfcf;
  overflow: hidden;
}
.nav-head {
  height: 28px;
  display: flex;
  align-items: center;
  justify-content: space-between;
  padding-right: 9px;
  background: #eff0f2;
  white-space: nowrap;
}
.nav-head span {
  margin-left: -1px;
}
.nav-list {
  width: 122px;
  margin-left: -31px;
  white-space: nowrap;
}
.nav-row {
  position: relative;
  height: 42px;
  display: flex;
  align-items: center;
  padding-left: 17px;
  background: #f5f7fa;
}
.nav-row.on {
  background: #ebedf1;
  color: #2b7de9;
}
.nav-row.sub {
  height: 28px;
  padding-left: 28px;
  background: #fff;
  box-shadow: 20px 0 0 #fff;
}
.nav-row.sub.on {
  color: #2b7de9;
}
.nav-ic {
  width: 24px;
  height: 24px;
  margin-right: 14px;
  flex: none;
}
.red-dot {
  position: absolute;
  left: 41px;
  top: 3px;
  width: 6px;
  height: 6px;
  border-radius: 50%;
  background: #f00;
}
.free-tag {
  position: absolute;
  left: 71px;
  top: 4px;
  width: 51px;
  height: 19px;
  box-sizing: border-box;
  padding-left: 5px;
  font-size: 11px;
  line-height: 19px;
  border-radius: 9px 0 0 9px;
  background: #f5c97a;
  color: #8a5a12;
  overflow: hidden;
}
.tag-lock {
  position: absolute;
  right: 1px;
  top: 12px;
  width: 7px;
  height: 6px;
  border: 1px solid #77684c;
}
.nav-scroll {
  position: absolute;
  left: 95px;
  top: 84px;
  width: 4px;
  height: 513px;
  border-radius: 2px;
  background: #e6e6e6;
}

.panels {
  width: 310px;
  flex: none;
  margin: 1px 3px 0 4px;
  display: flex;
  flex-direction: column;
  gap: 4px;
}
.panel {
  position: relative;
  box-sizing: border-box;
  border: 1px solid #d6d6d6;
  overflow: hidden;
  background: #fff;
}
.list-panel {
  height: 368px;
}
.attr-panel {
  height: 439px;
}
.panel-head {
  position: relative;
  height: 27px;
  display: flex;
  align-items: stretch;
  padding-left: 23px;
  background: #eff0f2;
}
.attr-panel .panel-head {
  height: 28px;
}
.grip {
  position: absolute;
  left: 5px;
  top: 7px;
  width: 7px;
  height: 14px;
  background: radial-gradient(circle, #8a8a8a 1.1px, transparent 1.3px) 0 0 / 3.5px 4.7px;
}
.tab {
  width: 68px;
  text-align: center;
  line-height: 27px;
  color: #333;
}
.attr-panel .tab {
  line-height: 29px;
}
.tab.active {
  background: #fff;
  color: #2b7de9;
}
.panel-head .close {
  position: absolute;
  right: 9px;
  top: 8px;
}
.toolbar {
  display: flex;
  gap: 9px;
  padding: 7px 0 0 10px;
}
.tool {
  width: 32px;
  height: 26px;
  flex: none;
  display: flex;
  align-items: center;
  justify-content: center;
  background: #f3f4f6;
  border-radius: 3px;
}
.tool.split {
  width: 45px;
  justify-content: flex-start;
}
.tool-ic {
  width: 16px;
  height: 16px;
}
.tool.split .tool-ic {
  margin-left: 8px;
}
.tool-drop {
  margin-left: 8px;
  height: 100%;
  width: 13px;
  display: flex;
  align-items: center;
  justify-content: center;
  border-left: 1px solid #fff;
}
.tool.more {
  width: 26px;
  margin-left: 2px;
  box-sizing: border-box;
  border: 1px solid #dcdcdc;
  font-size: 8px;
  letter-spacing: -1px;
  color: #666;
}
.search {
  margin: 7px 10px 0 8px;
  height: 26px;
  border-radius: 13px;
  background: #f3f4f6;
  display: flex;
  align-items: center;
  justify-content: space-between;
  padding: 0 12px;
  color: #9a9a9a;
}
.search-ic {
  width: 14px;
  height: 14px;
}
.tree {
  list-style: none;
  margin: 9px 0 0;
  padding: 0;
}
.tree-row {
  height: 24px;
  display: flex;
  align-items: center;
  padding-left: 24px;
}
.tree-row.head {
  padding-left: 6px;
}
.tree-caret {
  margin-right: 4px;
}
.tree-text em {
  margin-left: 8px;
  font-style: normal;
}
.tree-text.on {
  margin-left: -3px;
  padding: 2px 7px 2px 3px;
  border-radius: 3px;
  background: #c5daf2;
}
.panel-scroll {
  position: absolute;
  left: 295px;
  top: 166px;
  width: 4px;
  height: 188px;
  border-radius: 2px;
  background: #e6e6e6;
}

.attr-head {
  display: grid;
  grid-template-columns: 101px 153px 41px;
  width: 295px;
  height: 24px;
  margin-top: 3px;
  line-height: 23px;
  text-align: center;
  background: #eee;
  border-bottom: 1px solid #d8d8d8;
  box-sizing: border-box;
}
.attr-head span + span {
  border-left: 1px solid #d8d8d8;
}
.attr-head .strong {
  font-weight: 600;
}
.attr-group {
  width: 295px;
  height: 23px;
  display: flex;
  align-items: center;
  gap: 6px;
  padding-left: 8px;
  box-sizing: border-box;
  background: #eee;
}
.attr-row {
  display: grid;
  grid-template-columns: 101px 151px 1fr;
  width: 295px;
  height: 25px;
  align-items: center;
}
.attr-name {
  padding-left: 15px;
  white-space: nowrap;
  overflow: hidden;
}
.attr-name.blue {
  color: #2b7de9;
}
.attr-val {
  box-sizing: border-box;
  height: 21px;
  margin-left: 1px;
  padding-left: 2px;
  line-height: 19px;
  border: 1px solid #dcdcdc;
  background: #fff;
  white-space: nowrap;
}
.attr-val sup {
  font-size: 10px;
  line-height: 0;
  vertical-align: 3px;
}
.attr-val.focus {
  border-color: #4a7fd0;
}
.attr-dot {
  justify-self: end;
  width: 8px;
  height: 8px;
  margin-right: 16px;
  border-radius: 50%;
  background: #c4c4c4;
  border: 1px solid #ddd;
  box-sizing: border-box;
}
.attr-highlight {
  position: absolute;
  left: 5px;
  top: 107px;
  width: 261px;
  height: 22px;
  border: 3px solid #f4211c;
  border-radius: 3px;
  box-sizing: border-box;
}
.attr-scroll {
  position: absolute;
  left: 299px;
  top: 42px;
  width: 4px;
  height: 197px;
  border-radius: 2px;
  background: #e6e6e6;
}

.canvas {
  position: relative;
  flex: 1;
  min-width: 0;
  overflow: hidden;
  background: #000;
}
.cad {
  display: block;
}
.cad-text {
  font-family: 'Roboto', 'Liberation Sans', sans-serif;
  font-weight: 100;
  stroke-width: 0.3px;
}
.solid-text {
  fill: #fff;
  font-family: 'Liberation Sans', sans-serif;
}
.axis-no {
  fill: #fff;
  font-size: 18px;
  font-family: 'Liberation Sans', sans-serif;
}
.coord {
  font-size: 15px;
  font-family: 'Liberation Sans', sans-serif;
}
.tiny {
  fill: #eee;
  font-size: 9px;
  font-family: 'Noto Sans CJK SC', sans-serif;
}
.sheet-tabs {
  position: absolute;
  left: 5px;
  bottom: -3px;
  display: flex;
  gap: 4px;
}
.sheet-tabs i {
  height: 5px;
  border-radius: 3px 3px 0 0;
  background: #f4f4f4;
  border: 1px solid #ccc;
  box-sizing: border-box;
}
.sheet-tabs i.on {
  border-color: #5a9de8;
}
</style>

<style>
html,
body {
  margin: 0;
  overflow: hidden;
  background: #fff;
}
</style>
